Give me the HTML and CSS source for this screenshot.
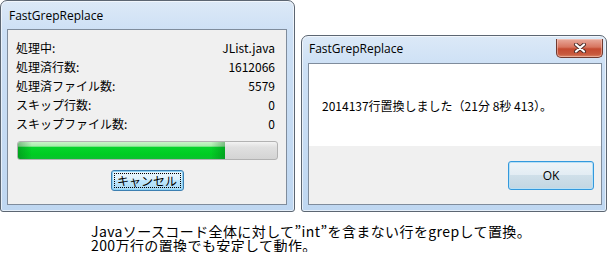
FILE: index.html
```html
<!DOCTYPE html>
<html lang="ja">
<head>
    <meta charset="UTF-8">
    <title>FastGrepReplace</title>
    <link rel="stylesheet" href="styles.css">
</head>
<body>

    <div class="windows">

        <!-- progress dialog -->
        <div class="window progress-window">
            <div class="titlebar">
                <span class="title">FastGrepReplace</span>
            </div>
            <div class="client">
                <div class="stats">
                    <div class="stat-row"><span>処理中:</span><span>JList.java</span></div>
                    <div class="stat-row"><span>処理済行数:</span><span>1612066</span></div>
                    <div class="stat-row"><span>処理済ファイル数:</span><span>5579</span></div>
                    <div class="stat-row"><span>スキップ行数:</span><span>0</span></div>
                    <div class="stat-row"><span>スキップファイル数:</span><span>0</span></div>
                </div>
                <div class="progress">
                    <div class="progress-fill" style="width: 80%"></div>
                </div>
                <div class="actions">
                    <button class="btn btn-cancel"><span class="focus-ring">キャンセル</span></button>
                </div>
            </div>
        </div>

        <!-- finished message box -->
        <div class="window message-window">
            <div class="titlebar">
                <span class="title">FastGrepReplace</span>
                <button class="close-btn" aria-label="閉じる">
                    <svg width="14" height="10" viewBox="0 0 14 10">
                        <path d="M3 1.5 L11 8.5 M11 1.5 L3 8.5" stroke="#4a2a26" stroke-width="4" stroke-linecap="round"/>
                        <path d="M3 1.5 L11 8.5 M11 1.5 L3 8.5" stroke="#ffffff" stroke-width="2.2" stroke-linecap="round"/>
                    </svg>
                </button>
            </div>
            <div class="client">
                <div class="message-body">2014137行置換しました（21分 8秒 413）。</div>
                <div class="message-footer">
                    <button class="btn btn-ok">OK</button>
                </div>
            </div>
        </div>

    </div>

    <p class="caption">
        Javaソースコード全体に対して”int”を含まない行をgrepして置換。<br>
        200万行の置換でも安定して動作。
    </p>

</body>
</html>
```

FILE: styles.css
```css
* {
    margin: 0;
    padding: 0;
    box-sizing: border-box;
}

body {
    background-color: #ffffff;
    color: #000000;
    font-family: "Noto Sans CJK JP", "Noto Sans", sans-serif;
    font-size: 12px;
}

.windows {
    display: flex;
    align-items: flex-end;
    gap: 6px;
}

/* window frame (aero basic look) */
.window {
    display: flex;
    flex-direction: column;
    border: 1px solid #5c6672;
    border-radius: 7px 7px 3px 3px;
    background: linear-gradient(to bottom, #dce9f7 0px, #cde0f5 30px, #bfd7f1 100%);
    box-shadow: inset 0 0 0 1px rgba(255, 255, 255, 0.6);
}

.progress-window {
    width: 295px;
    height: 212px;
}

.message-window {
    width: 306px;
    height: 177px;
}

.titlebar {
    display: flex;
    justify-content: space-between;
    align-items: flex-start;
}

.progress-window .titlebar {
    height: 28px;
    padding: 7px 0 0 8px;
}

.message-window .titlebar {
    height: 27px;
    padding: 5px 0 0 7px;
}

.title {
    font-family: "Open Sans", "Noto Sans", sans-serif;
    font-size: 12px;
    line-height: 16px;
    color: #000000;
}

.close-btn {
    width: 47px;
    height: 19px;
    margin: -2px 3px 0 0;
    border: 1px solid #6f3a30;
    border-top: none;
    border-radius: 0 0 5px 5px;
    background: linear-gradient(to bottom, #e9a99b 0%, #d7755f 45%, #c44a30 55%, #c85a3e 85%, #dd8a6a 100%);
    box-shadow: inset 0 0 0 1px rgba(255, 220, 210, 0.45);
    display: flex;
    align-items: center;
    justify-content: center;
}

.client {
    flex: 1;
    border: 1px solid #7f8c9c;
    background-color: #f0f0f0;
}

.progress-window .client {
    margin: 0 7px 6px 6px;
    padding: 8px 8px 0 8px;
}

.message-window .client {
    margin: 0 4px 6px 6px;
    display: flex;
    flex-direction: column;
}

/* progress dialog contents */
.stat-row {
    display: flex;
    justify-content: space-between;
    line-height: 19px;
    padding-right: 3px;
}

.progress {
    height: 19px;
    margin: 8px 0 0 1px;
    border: 1px solid #b2b2b2;
    border-radius: 3px;
    background: linear-gradient(to bottom, #f3f3f3 0%, #e0e0e0 30%, #d4d4d4 100%);
    overflow: hidden;
}

.progress-fill {
    height: 100%;
    background:
        linear-gradient(to right, rgba(0, 90, 20, 0.35) 0px, rgba(0, 90, 20, 0) 14px, rgba(0, 90, 20, 0) calc(100% - 14px), rgba(0, 90, 20, 0.35) 100%),
        linear-gradient(to bottom, #c8f5c8 0%, #a8ecac 25%, #06d42c 30%, #00cc22 75%, #0ec032 100%);
}

.actions {
    display: flex;
    justify-content: center;
    margin-top: 10px;
}

.btn {
    font-family: "Noto Sans CJK JP", "Noto Sans", sans-serif;
    font-size: 12px;
    color: #000000;
    border-radius: 3px;
    cursor: pointer;
}

.btn-cancel {
    width: 73px;
    height: 21px;
    padding: 2px;
    border: 1px solid #3c7fb1;
    background: linear-gradient(to bottom, #eaf6fd 0%, #d9f0fc 50%, #bee6fd 50%, #a7d9f5 100%);
    box-shadow: inset 0 0 0 1px #8fd3f5;
}

.focus-ring {
    display: block;
    height: 100%;
    line-height: 14px;
    border: 1px dotted #000000;
}

/* message box contents */
.message-body {
    height: 82px;
    background-color: #ffffff;
    padding: 33px 0 0 13px;
    line-height: 18px;
}

.message-footer {
    flex: 1;
    display: flex;
    justify-content: flex-end;
    align-items: flex-start;
    padding: 15px 7px 0 0;
}

.btn-ok {
    width: 86px;
    height: 29px;
    font-family: "Open Sans", "Noto Sans", sans-serif;
    font-size: 12px;
    border: 1px solid #3399dd;
    background: linear-gradient(to bottom, #eef4f8 0%, #e2ecf3 50%, #cfdfe9 50%, #c3d6e2 100%);
    box-shadow: inset 0 0 0 1px #b8e0f5;
}

/* caption under the screenshots */
.caption {
    margin: 12px 0 0 91px;
    font-size: 14px;
    line-height: 14px;
    letter-spacing: 0.4px;
}
```
